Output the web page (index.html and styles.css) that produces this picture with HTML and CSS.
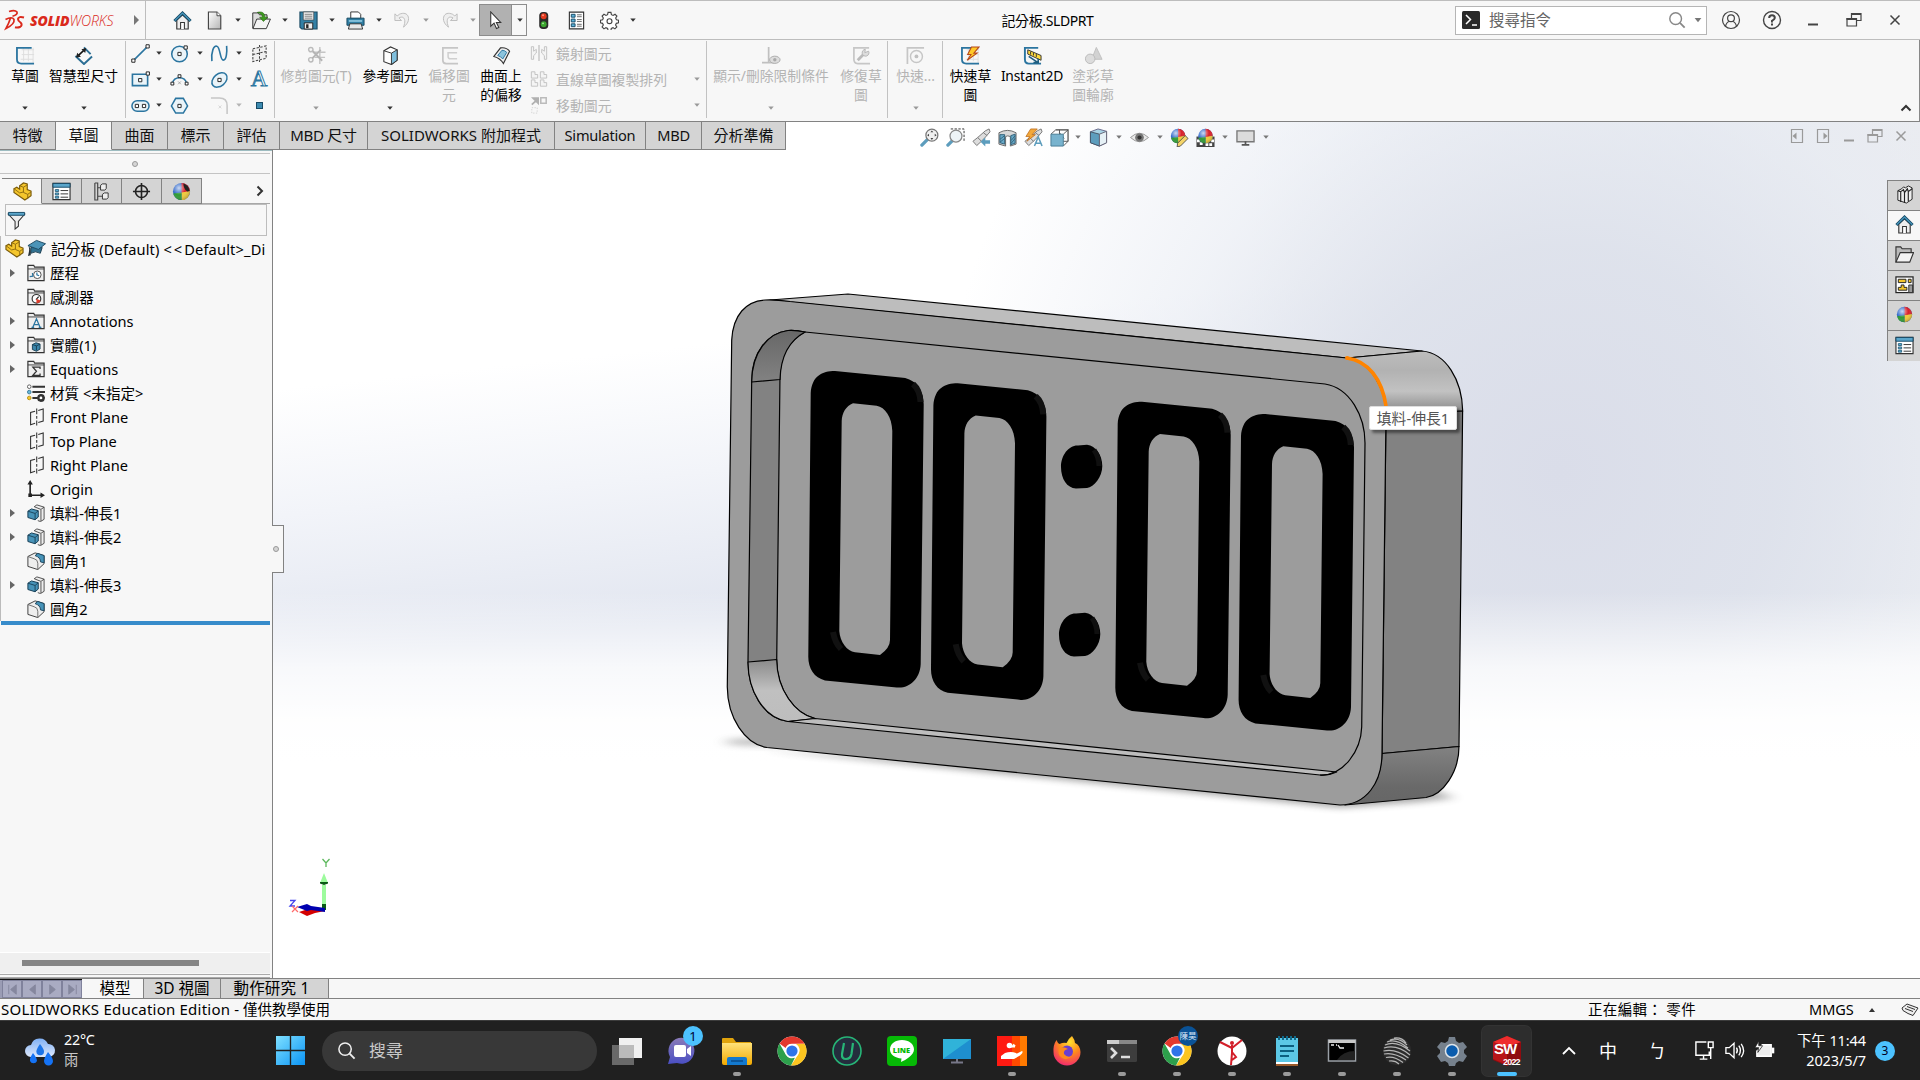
FILE: index.html
```html
<!DOCTYPE html>
<html lang="zh-Hant">
<head>
<meta charset="utf-8">
<title>記分板.SLDPRT</title>
<link rel="stylesheet" href="styles.css">
</head>
<body>
<svg class="defs" width="0" height="0">
<defs>
<linearGradient id="gBlue" x1="0" y1="0" x2="1" y2="1"><stop offset="0" stop-color="#8cc4dd"/><stop offset="1" stop-color="#2f7ea3"/></linearGradient>
<linearGradient id="gGrey" x1="0" y1="0" x2="1" y2="1"><stop offset="0" stop-color="#fff"/><stop offset="1" stop-color="#b5b5b5"/></linearGradient>
<linearGradient id="gYel" x1="0" y1="0" x2="0" y2="1"><stop offset="0" stop-color="#ffe27a"/><stop offset="1" stop-color="#f2a900"/></linearGradient>
<linearGradient id="gWin" x1="0" y1="0" x2="1" y2="1"><stop offset="0" stop-color="#7fe0ff"/><stop offset="1" stop-color="#0a94f5"/></linearGradient>
<radialGradient id="gFox" cx=".6" cy=".2" r=".9"><stop offset="0" stop-color="#ffe22e"/><stop offset=".45" stop-color="#ff8a1c"/><stop offset="1" stop-color="#f0197d"/></radialGradient>
<linearGradient id="gCloud" x1="0" y1="0" x2="0" y2="1"><stop offset="0" stop-color="#7fb0f5"/><stop offset="1" stop-color="#dfe9fb"/></linearGradient>
<linearGradient id="gChat" x1="0" y1="0" x2="0" y2="1"><stop offset="0" stop-color="#8a7bb8"/><stop offset="1" stop-color="#4a4fc4"/></linearGradient>
<radialGradient id="gShine" cx=".35" cy=".3" r=".8"><stop offset="0" stop-color="#fff" stop-opacity=".75"/><stop offset=".5" stop-color="#fff" stop-opacity="0"/><stop offset="1" stop-color="#000" stop-opacity=".3"/></radialGradient>
<linearGradient id="gTL" x1="0" y1="0" x2="0" y2="1"><stop offset="0" stop-color="#676767"/><stop offset="1" stop-color="#828282"/></linearGradient>
<linearGradient id="gBL" x1="0" y1="0" x2="0" y2="1"><stop offset="0" stop-color="#8a8a8a"/><stop offset=".5" stop-color="#c0c0c0"/><stop offset="1" stop-color="#bdbdbd"/></linearGradient>
<linearGradient id="gTR" x1="0" y1="0" x2="0" y2="1"><stop offset="0" stop-color="#bdbdbd"/><stop offset=".3" stop-color="#b2b2b2"/><stop offset=".62" stop-color="#c2c2c2"/><stop offset="1" stop-color="#7e7e7e"/></linearGradient>
<linearGradient id="gBR" x1="0" y1="0" x2="0" y2="1"><stop offset="0" stop-color="#828282"/><stop offset=".7" stop-color="#696969"/><stop offset="1" stop-color="#666"/></linearGradient>
<filter id="soft" x="-30%" y="-200%" width="160%" height="500%"><feGaussianBlur stdDeviation="7 3"/></filter>

<symbol id="house" viewBox="0 0 20 20"><path d="M4 9.5V19h12V9.5L10 4z" fill="#eee" stroke="#333" stroke-width="1.2"/><path d="M8 19v-7h4v7" fill="#fff" stroke="#333" stroke-width="1.1"/><path d="M1.5 10.5 10 2.2l8.5 8.3" fill="none" stroke="#174a66" stroke-width="3.2"/><path d="M1.8 10.2 10 2.2l8.2 8" fill="none" stroke="#4b9cc2" stroke-width="1.2"/></symbol>
<symbol id="doc" viewBox="0 0 20 20"><path d="M3.6 1h9l4 4v14h-13z" fill="url(#gGrey)" stroke="#444" stroke-width="1.2"/><path d="M12.6 1v4h4" fill="#fff" stroke="#444"/></symbol>
<symbol id="open" viewBox="0 0 20 20"><path d="M.8 2h6l1 2h8v4L13 18H.8z" fill="#ddd" stroke="#333"/><path d="M5 8.5h14.4L15 18.6H1z" fill="#f4f4f4" stroke="#333"/><path d="M5.5 1.5c5-1.5 8 .5 8 5h3.2L12 11 8 6.500h3C11 4 9 2.500 5.500 1.500z" fill="#3c9a1e" stroke="#245f10" stroke-width=".6"/></symbol>
<symbol id="save" viewBox="0 0 20 20"><path d="M1 1h18v18H3l-2-2z" fill="#3380a5" stroke="#1c4a63" stroke-width="1.2"/><path d="M4.500 1h11v8.500h-11z" fill="#eee" stroke="#444" stroke-width=".7"/><path d="M6 3.500h8M6 5.500h8M6 7.500h8" stroke="#666" stroke-width=".8"/><path d="M5.500 12.500h9V19h-9z" fill="#eee" stroke="#222"/><path d="M7.500 14h2.500v4H7.500z" fill="#222"/></symbol>
<symbol id="print" viewBox="0 0 20 20"><path d="M5 8V1h8l2.500 2.500V8z" fill="#fff" stroke="#333"/><path d="M1 7.500h18V15H1z" fill="#2f7ea3" stroke="#184a62"/><path d="M3 10.500h14" stroke="#a8dcf0" stroke-width="1.400"/><path d="M4 13.500h12l1.500 5.500h-15z" fill="#e8e8e8" stroke="#333"/></symbol>
<symbol id="undo" viewBox="0 0 20 20"><path d="M2 3v7h7L6.300 7.300C11 4.500 14.500 8.500 11 17c8.500-6 6-15.500-1-14.500-2.500.3-4.300 1.200-5.500 2.800z" fill="#efefef" stroke="#bdbdbd"/></symbol>
<symbol id="cursor" viewBox="0 0 20 20"><path d="M5 1v15l3.500-3.200L11 18.500l2.500-1.200-2.600-5.300H15.500z" fill="#fff" stroke="#333" stroke-width="1.100"/></symbol>
<symbol id="traffic" viewBox="0 0 20 20"><rect x="5.500" y="1" width="9.500" height="18" rx="4" fill="#2a2a2a"/><circle cx="10.200" cy="5.500" r="3.100" fill="#e23a1e"/><circle cx="10.200" cy="14" r="3.100" fill="#3aa52e"/><circle cx="9.500" cy="4.500" r="1" fill="#ff9c86"/><circle cx="9.500" cy="13" r="1" fill="#a8e69c"/></symbol>
<symbol id="opts" viewBox="0 0 20 20"><path d="M2.500 1.200h15v17.600h-15z" fill="#fff" stroke="#333" stroke-width="1.200"/><path d="M4.500 3.500h4v3h-4zM4.500 8.500h4v3h-4zM4.500 13.500h4v3h-4z" fill="#5cb3d9" stroke="#174a66"/><path d="M10.500 4h5M10.500 6h5M10.500 9h5M10.500 11h5M10.500 14h5M10.500 16h5" stroke="#444" stroke-width=".8"/></symbol>
<symbol id="gear" viewBox="0 0 20 20"><path d="M8.500 1.500h3l.5 2.400 1.800.8 2-1.300 2 2-1.300 2 .8 1.800 2.200.5v2.800l-2.300.5-.8 1.700 1.300 2.100-2 2-2-1.300-1.800.8-.4 2.200h-3l-.5-2.200-1.800-.8-2 1.300-2-2 1.300-2-.8-1.800-2.200-.5V9.700l2.300-.5.700-1.800-1.300-2 2-2 2.100 1.300 1.700-.8z" fill="#fff" stroke="#444" stroke-width="1.200"/><circle cx="10" cy="10.700" r="2.600" fill="#fff" stroke="#444" stroke-width="1.200"/></symbol>
<symbol id="dn" viewBox="0 0 8 8"><path d="M1.300 2.400h5.400L4 5.800z" fill="currentColor"/></symbol>

<symbol id="sketch" viewBox="0 0 20 20"><path d="M6 4h13M6 9h13M5 14h13M8 2v14M13 2v14M18 2v16" stroke="#ddd"/><path d="M16.500 2H1v12q0 4.500 4.500 4.500H19" fill="none" stroke="#2b75a0" stroke-width="1.900"/></symbol>
<symbol id="dim" viewBox="0 0 20 20"><path d="M10.500 1.500l7 7M1.500 10.500 10.500 19l8.500-8" fill="none" stroke="#2b6e94" stroke-width="2"/><path d="M3 11.500 12 3" stroke="#111" stroke-width="1.600"/><path d="m2.300 12.200 1-5 4 4zM12.800 2.300l-1 5-4-4z" fill="#222"/></symbol>
<symbol id="line" viewBox="0 0 20 20"><path d="M3 17 17 3" stroke="#2b75a0" stroke-width="1.600"/><path d="M.8 15.800h3.400v3.400H.8zM15.800.8h3.400v3.400h-3.400z" fill="#fff" stroke="#222"/></symbol>
<symbol id="circ" viewBox="0 0 20 20"><circle cx="10" cy="10.500" r="8.200" fill="#eaf4f9" stroke="#2b75a0" stroke-width="1.600"/><path d="M8.300 8.800h3.400v3.400H8.300zM14.800 2h3.400v3.400h-3.400z" fill="#fff" stroke="#222"/></symbol>
<symbol id="spline" viewBox="0 0 20 20"><path d="M2 18C1 8 4 1 7.500 2.500S10.500 17 14 17 18 8 17.500 2" fill="none" stroke="#2b75a0" stroke-width="1.700"/></symbol>
<symbol id="plane" viewBox="0 0 20 20"><path d="M3 5 17 2v13L3 18.500zM10 1v18M3 11l14-3" fill="#f0f0f0" stroke="#444" stroke-width="1.100" stroke-dasharray="2.500 1.500"/></symbol>
<symbol id="rect" viewBox="0 0 20 20"><path d="M1.500 4.500h16v12h-16z" fill="#eaf4f9" stroke="#2b75a0" stroke-width="1.700"/><path d="M8 9h3.400v3.400H8zM16 2h3.400v3.400H16z" fill="#fff" stroke="#222"/></symbol>
<symbol id="arc" viewBox="0 0 20 20"><path d="M2.500 14a7.700 7.700 0 0 1 15 0" fill="none" stroke="#2b75a0" stroke-width="1.600"/><path d="M1 12.800h3v3H1zM16 12.800h3v3h-3zM8.500 5h3v3h-3z" fill="#fff" stroke="#222"/><path d="m8.500 12 3 3m0-3-3 3" stroke="#999" stroke-width=".8"/></symbol>
<symbol id="ell" viewBox="0 0 20 20"><ellipse cx="10" cy="10.500" rx="9" ry="6.300" transform="rotate(-40 10 10.500)" fill="#eaf4f9" stroke="#2b75a0" stroke-width="1.600"/><path d="M8.300 8.800h3.400v3.400H8.300z" fill="#fff" stroke="#222"/></symbol>
<symbol id="slot" viewBox="0 0 20 20"><rect x="1" y="5" width="18" height="11" rx="5.500" fill="#eaf4f9" stroke="#2b75a0" stroke-width="1.600"/><path d="M4.500 8.800h3.400v3.400H4.500zM12 8.800h3.400v3.400H12z" fill="#fff" stroke="#222"/></symbol>
<symbol id="hex" viewBox="0 0 20 20"><path d="M6 2.500h8l4.500 8L14 18H6l-4.500-7.500z" fill="#eaf4f9" stroke="#2b75a0" stroke-width="1.600"/><path d="M8.300 8.800h3.400v3.400H8.300z" fill="#fff" stroke="#222"/></symbol>
<symbol id="fillet" viewBox="0 0 20 20"><path d="M1 2h9q8 0 8 8v9" fill="none" stroke="#c6c6c6" stroke-width="1.600"/><path d="m9 10 3 3m0-3-3 3" stroke="#d5d5d5"/></symbol>
<symbol id="trim" viewBox="0 0 20 20"><path d="M13.500 1v18M7 6.500h12.500M8 12h11" stroke="#c4c4c4" stroke-width="1.500"/><circle cx="4" cy="3.800" r="2.300" fill="none" stroke="#bbb" stroke-width="1.500"/><circle cx="4" cy="14.500" r="2.300" fill="none" stroke="#bbb" stroke-width="1.500"/><path d="m6 5.500 10 10M5.500 13l9-9" stroke="#b5b5b5" stroke-width="2"/></symbol>
<symbol id="cube" viewBox="0 0 20 20"><path d="m3 5 7-4 7 3v11l-6 4.500-8-3z" fill="#fff" stroke="#333" stroke-width="1.100"/><path d="m11 7.500 6-3.500v11l-6 4.500z" fill="#7fbfdd" stroke="#333"/><path d="m3 5 8 2.500" stroke="#333"/></symbol>
<symbol id="offs" viewBox="0 0 20 20"><path d="M19 2H3v13q0 3.500 3.500 3.500H19" fill="none" stroke="#c6c6c6" stroke-width="1.800"/><path d="M18 7H8.500v4q0 2.500 2.500 2.500h7" fill="none" stroke="#cfcfcf" stroke-width="1.600"/></symbol>
<symbol id="surf" viewBox="0 0 20 20"><path d="M2 11 9 2q6-1 9.500 3.500L12 18.500Q9 13 2 11z" fill="#eee" stroke="#333" stroke-width="1.200"/><path d="m6 10 4.500-5.500q3 0 5 2.200l-4.200 7Q9.500 11 6 10z" fill="#8cc4dd" stroke="#2b75a0"/></symbol>
<symbol id="mirror" viewBox="0 0 20 20"><path d="M10 1v18" stroke="#bbb" stroke-width="1.300"/><path d="M1.500 3v14h2.500v-4l3-3V6L4 8V3zM18.500 3v14H16v-4l-3-3V6l3 2V3z" fill="#f4f4f4" stroke="#c0c0c0"/></symbol>
<symbol id="patt" viewBox="0 0 20 20"><g fill="#f4f4f4" stroke="#c0c0c0"><path id="pc" d="M1.500 2h4v3h3v4h-7z"/><use href="#pc" x="10"/><use href="#pc" y="9"/><use href="#pc" x="10" y="9"/></g></symbol>
<symbol id="move" viewBox="0 0 20 20"><path d="M2 9.500 8 4M3.500 2.500H9V8z" fill="#b0b0b0" stroke="#b0b0b0" stroke-width="2"/><path d="M12 2h6v6h-6z" fill="none" stroke="#bbb" stroke-width="1.700"/><path d="M2 13h6v6H2z" fill="none" stroke="#d0d0d0" stroke-dasharray="1.500 1.500"/></symbol>
<symbol id="rel" viewBox="0 0 20 20"><path d="M7 1v16.500M0 17.500h13" stroke="#c0c0c0" stroke-width="1.800"/><ellipse cx="13.500" cy="14.500" rx="5.500" ry="3.800" fill="#ddd" stroke="#aaa"/><circle cx="13.500" cy="14.500" r="1.800" fill="#aaa"/></symbol>
<symbol id="repair" viewBox="0 0 20 20"><path d="M18 2H2v12q0 4.500 4 4.500h13" fill="none" stroke="#c6c6c6" stroke-width="1.800"/><path d="m6 15 7-7" stroke="#bbb" stroke-width="3"/><path d="M17.500 5.500A3.600 3.600 0 1 1 14 3.500L13.500 7z" fill="#ddd" stroke="#b5b5b5"/></symbol>
<symbol id="snap" viewBox="0 0 20 20"><path d="M1.500 19V2H19" fill="none" stroke="#c6c6c6" stroke-width="1.800"/><circle cx="11" cy="11" r="6.300" fill="none" stroke="#c6c6c6" stroke-width="1.500"/><circle cx="11" cy="11" r="2" fill="#c0c0c0"/></symbol>
<symbol id="rapid" viewBox="0 0 20 20"><use href="#sketch" width="20" height="20"/><path d="m11 1-4 8h3.500L6.500 15 17 7.500h-3.500L19 1z" fill="#ffc928" stroke="#b5471b" stroke-width="1.100"/></symbol>
<symbol id="i2d" viewBox="0 0 20 20"><path d="M16 2H2v12q0 4.500 4 4.500h13" fill="none" stroke="#2b75a0" stroke-width="2"/><path d="m5 4 14 6v5L5 8.500z" fill="#ffdb3d" stroke="#333"/><path d="M8 6v3M11 7v3M14 8.500v3" stroke="#333"/><path d="m6 11 9 6m1-3.500v4h-5" stroke="#1f5e80" stroke-width="1.700" fill="none"/></symbol>
<symbol id="shade" viewBox="0 0 20 20"><path d="m13 1.500 6 12.500H8z" fill="#d2d2d2" stroke="#c0c0c0"/><circle cx="6.500" cy="13.500" r="5" fill="#dcdcdc" stroke="#bbb"/></symbol>

<symbol id="zfit" viewBox="0 0 20 20"><path d="m2 18 6.500-6.500" stroke="#5d9dbd" stroke-width="3.500" stroke-linecap="round"/><circle cx="12.500" cy="7.500" r="6.300" fill="#f0f0f0" stroke="#777" stroke-width="1.300"/><path d="m12.500 2.500 1.500 2h-3zM12.500 12.500l1.500-2h-3zM7.500 7.500l2-1.500v3zM17.500 7.500l-2-1.500v3z" fill="#444"/></symbol>
<symbol id="zarea" viewBox="0 0 20 20"><path d="M5 1h14v13" fill="none" stroke="#333" stroke-dasharray="2.500 1.500"/><path d="m2 18 5-5" stroke="#5d9dbd" stroke-width="3.500" stroke-linecap="round"/><circle cx="10.500" cy="8.500" r="6.300" fill="#eef4f7" stroke="#888" stroke-width="1.300"/></symbol>
<symbol id="scope" viewBox="0 0 20 20"><path d="m1 14 5-4L14 3l4-2 1 3-7 8-7 6.500z" fill="#ddd" stroke="#777"/><path d="m6 10 4 4M12 5l4 3" stroke="#777"/></symbol>
<symbol id="prev" viewBox="0 0 20 20"><use href="#scope" width="20" height="20"/><path d="M9 14.500 14 10v3h5v3.500h-5v3z" fill="#5d9dbd"/></symbol>
<symbol id="sect" viewBox="0 0 20 20"><path d="M1 5q9-5 18 0v12l-6 2V9q-3-1.500-5 0v10l-7-2z" fill="#d8d8d8" stroke="#666"/><path d="M2 7h5v10l-5-1.500zM13.500 8 18 6.500v9.500l-4.500 1.500z" fill="#69a9c7" stroke="#31617a"/><path d="m2 12 5-4M2 15l5-4M14 13l4-5M14 16l4-5" stroke="#26566e" stroke-width=".8"/></symbol>
<symbol id="dyn" viewBox="0 0 20 20"><use href="#scope" width="20" height="20"/><path d="M7 1 2 9h4l-3 5 9-7H8.500L14 1z" fill="#f3a83a" stroke="#b9681b" stroke-width=".8"/><path d="m11 19 4-9.500 4 9.500M12.500 16h5" fill="none" stroke="#5d9dbd" stroke-width="1.600"/></symbol>
<symbol id="orient" viewBox="0 0 20 20"><path d="M6 2h13v12" fill="none" stroke="#444" stroke-width="1.200"/><path d="M1 6.500 6 2M14 6.500 19 2M14 19l5-5M10 2v12h9M10 5l5 6" stroke="#555" fill="none"/><path d="M1 6.500h13V19H1z" fill="#78b3ce" stroke="#4a7d96"/></symbol>
<symbol id="disp" viewBox="0 0 20 20"><path d="m1.500 4 8-3 9 2.500v12L11 19l-9.500-3.500z" fill="#a8d3e5" stroke="#668"/><path d="M1.500 4 11 6.500V19l-9.500-3.500z" fill="#5d9dbd" stroke="#456"/><path d="m11 6.500 7.500-3v12L11 19z" fill="#e6f1f6" stroke="#667"/></symbol>
<symbol id="eye" viewBox="0 0 20 20"><path d="M.5 10Q10 1 19.500 10 10 19 .5 10z" fill="#e8e8e8" stroke="#999"/><circle cx="10" cy="10" r="4.600" fill="#777"/><circle cx="10" cy="10" r="2.200" fill="#333"/></symbol>
<symbol id="ball" viewBox="0 0 20 20"><circle cx="10" cy="10" r="9" fill="#2f67c9"/><path d="M10 1a9 9 0 0 1 9 8.500L10 12z" fill="#d8202a"/><path d="m10 11 9-1.500a9 9 0 0 1-9 9.500z" fill="#f0ca3a"/><path d="M1.300 12 10 11v8a9 9 0 0 1-8.700-7z" fill="#2f9a34"/><circle cx="10" cy="10" r="9" fill="url(#gShine)"/></symbol>
<symbol id="ballcut" viewBox="0 0 20 20"><use href="#ball" width="20" height="20"/><path d="M12 1.500q6 2 6.500 8l-2.500.5q-4-3-4-8.500z" fill="#222"/></symbol>
<symbol id="appear" viewBox="0 0 20 20"><use href="#ball" width="17" height="17"/><path d="m8 16 8-8 3 3-8 8-3.500 1z" fill="#f4d469" stroke="#444" stroke-width=".9"/></symbol>
<symbol id="scene" viewBox="0 0 20 20"><path d="M.5 9v11h19V9z" fill="#444"/><path d="M1 12h3v3H1zM4 15h3v3H4zM10 16h3v3h-3zM16 12h3v3h-3zM14 16h3v3h-3z" fill="#fff"/><use href="#ball" x="1.500" width="17" height="17"/></symbol>
<symbol id="mon" viewBox="0 0 20 20"><path d="M1 3h18v11.500H1z" fill="#dcdcdc" stroke="#777" stroke-width="1.400"/><path d="M10 14v3.500M6 17.800h8" stroke="#555" stroke-width="1.800"/></symbol>
<symbol id="restore" viewBox="0 0 16 16"><path d="M5.500 6V1.500h9.500v7h-5" fill="none" stroke="currentColor" stroke-width="1.200"/><path d="M5 2h10" stroke="currentColor" stroke-width="2"/><path d="M1 6.500h9.500v7.500H1z" fill="none" stroke="currentColor" stroke-width="1.200"/><path d="M.5 7h10.500" stroke="currentColor" stroke-width="2"/></symbol>
<symbol id="x" viewBox="0 0 16 16"><path d="m3.500 3.500 9 9m0-9-9 9" stroke="currentColor" stroke-width="1.500"/></symbol>
<symbol id="min" viewBox="0 0 16 16"><path d="M3 12.500h10" stroke="currentColor" stroke-width="2"/></symbol>
<symbol id="pl" viewBox="0 0 16 16"><path d="M2.500 1.500h11v13h-11z" fill="none" stroke="currentColor" stroke-width="1.200"/><path d="m3.500 8 4-3.500v7z" fill="currentColor"/></symbol>
<symbol id="mag" viewBox="0 0 20 20"><circle cx="8.500" cy="8.500" r="6.500" fill="none" stroke="currentColor" stroke-width="1.600"/><path d="m13.300 13.300 5.200 5.200" stroke="currentColor" stroke-width="2"/></symbol>

<symbol id="part" viewBox="0 0 20 20"><path d="m1 7 3-1.500 3 2V4l4-3 4 1v6l4 1.500v5L12.500 19 1 11z" fill="#f5c62c" stroke="#7a5b0a" stroke-width="1.200"/><path d="m7 4 4 1.500V11l4.500 2V18M11 5.500 15 3M15.500 13l3.500-2.500M1 7l6 4.500 4-1" fill="none" stroke="#8f6d10"/></symbol>
<symbol id="ptree" viewBox="0 0 20 20"><path d="M1 1.500h18v17H1z" fill="#fff" stroke="#333" stroke-width="1.200"/><path d="M1 1.500h18v4H1z" fill="#5aa6cb" stroke="#174a66"/><path d="M3.500 8h3.500v2H3.500zM3.500 11.500h3.500v2H3.500zM3.500 15h3.500v2H3.500z" fill="#5cb3d9" stroke="#174a66" stroke-width=".8"/><path d="M9 9h8M9 12.500h8M9 16h8" stroke="#333"/></symbol>
<symbol id="conf" viewBox="0 0 20 20"><path d="M3 1v18h3v-4M3 1h3v4M6 5v10M6 6h4M6 15h6" fill="none" stroke="#444" stroke-width="1.200"/><path d="m9 3.500 2-1.500h4v5l-1.500 1.500H9zM11 13l2-1.500h4v5L15.500 18H11z" fill="#eee" stroke="#333"/></symbol>
<symbol id="target" viewBox="0 0 20 20"><circle cx="10" cy="10" r="6.300" fill="none" stroke="#222" stroke-width="1.700"/><path d="M10 1v18M1 10h18" stroke="#222" stroke-width="1.700"/></symbol>
<symbol id="funnel" viewBox="0 0 20 20"><path d="M1.500 3.500h17L12 11v5l-3.500 3v-8z" fill="#eee" stroke="#333" stroke-width="1.100"/><path d="M1.500 1.500h17v3h-17z" fill="#5aa6cb" stroke="#174a66"/></symbol>
<symbol id="cap" viewBox="0 0 20 20"><path d="M4 9v6q5-3 10 0l2-6z" fill="#2f7090" stroke="#183c50"/><path d="m1 7 9-5.500L19.500 5 12 11z" fill="#4b94b8" stroke="#1d4a62"/><path d="M1.500 7.500C3 10 2 14 1 18l3-1q0-6-1-8z" fill="#26323a"/></symbol>
<symbol id="fold" viewBox="0 0 20 20"><path d="M1 18.500V1.500h6.500l1 2H19v15z" fill="#eee" stroke="#333" stroke-width="1.300"/><path d="M1 5.500h18" stroke="#333"/></symbol>
<symbol id="f-hist" viewBox="0 0 20 20"><use href="#fold" width="20" height="20"/><circle cx="11.500" cy="12" r="4.200" fill="#fff" stroke="#444"/><path d="M11 9.500V12l2.500 1M3 14l3.500-.5L6 10" fill="none" stroke="#2b75a0" stroke-width="1.300"/></symbol>
<symbol id="f-sens" viewBox="0 0 20 20"><use href="#fold" width="20" height="20"/><circle cx="10.500" cy="12" r="4.800" fill="#fff" stroke="#333" stroke-width="1.300"/><path d="m10 13 3-3.500" stroke="#222" stroke-width="1.300"/><path d="M10.500 12v5q4 0 4.500-3z" fill="#dd3b2a"/></symbol>
<symbol id="f-a" viewBox="0 0 20 20"><use href="#fold" width="20" height="20"/><path d="m6.500 17 4-9.500 4 9.500M8 14h5M5 17h3M13 17h3" fill="none" stroke="#2b75a0" stroke-width="1.400"/></symbol>
<symbol id="f-body" viewBox="0 0 20 20"><use href="#fold" width="20" height="20"/><path d="m6 9.500 4-2 4.500 1.500v5.500l-4 2.500L6 15z" fill="#3b86ab" stroke="#173c50"/><path d="m6 9.500 4.500 1.500 4-2M10.500 11v5" stroke="#173c50" fill="none"/></symbol>
<symbol id="f-eq" viewBox="0 0 20 20"><use href="#fold" width="20" height="20"/><path d="M14.500 10V8H6.500l4 4.500-4 4.500h8v-2" fill="none" stroke="#333" stroke-width="1.400"/></symbol>
<symbol id="mat" viewBox="0 0 20 20"><path d="M6 3h14M6 9h14M6 15.500h6" stroke="#333" stroke-width="2.200"/><circle cx="2.500" cy="3" r="2" fill="#fff" stroke="#555"/><circle cx="2.500" cy="9" r="2" fill="#6bb8da" stroke="#37799a"/><circle cx="2.500" cy="15.500" r="2" fill="#f5c62c" stroke="#b98e10"/><circle cx="15.500" cy="15.500" r="3" fill="none" stroke="#333" stroke-width="2.600"/><path d="M15.500 11v9M11 15.500h9M12.300 12.300l6.400 6.400m0-6.400-6.400 6.400" stroke="#333" stroke-width="1.300"/><circle cx="15.500" cy="15.500" r="1.500" fill="#fff"/></symbol>
<symbol id="refp" viewBox="0 0 20 20"><path d="M9 17 4 18.500V5l5-1.500M12.500 2.700 18 1v13.500l-5.500 1.500M10.800.5V7M10.800 9v3M10.800 14v5.500" fill="none" stroke="#333" stroke-width="1.200"/></symbol>
<symbol id="orig" viewBox="0 0 20 20"><path d="M3.500 4v13H17" fill="none" stroke="#222" stroke-width="1.800"/><path d="M3.500 0 6.500 5h-6zM20 17l-5-3v6zM1.500 15h4v4h-4z" fill="#222"/></symbol>
<symbol id="extr" viewBox="0 0 20 20"><path d="m8 3 3-2 8 2.500V17l-4 2.500-3-1" fill="#eee" stroke="#444"/><path d="M15.500 6.500V19M8 3l7.500 3 3.500-2.500" fill="none" stroke="#444"/><path d="m1 8 4-2.500 7.500 2v7L9 17.500l-8-2.500z" fill="#4793b8" stroke="#184057" stroke-width="1.100"/><path d="m1 8 8 2.500 3.500-3M9 10.500v7" fill="none" stroke="#184057"/></symbol>
<symbol id="fil" viewBox="0 0 20 20"><path d="m1 5 8-4 10 3v9l-7 6.500L1 16z" fill="#eee" stroke="#444" stroke-width="1.100"/><path d="m9 4 3-2.500L19 4v8l-4-1q0-5-6-7z" fill="#4793b8" stroke="#184057"/><path d="m1 5 7 2.500q4 1 4 5v7" fill="none" stroke="#666"/></symbol>
<symbol id="books" viewBox="0 0 20 20"><path d="m3 6 4-2 2-2 2 1 3-2 4 2v12l-6 4-9-3z" fill="#eee" stroke="#222"/><path d="m3 6 3 1v11M6 7l3-2 1 3v11M10 8l3-4 1 3v10M14 7l4-3" fill="none" stroke="#222" stroke-width="1.200"/></symbol>
<symbol id="folder" viewBox="0 0 20 20"><path d="M1 18V2h5l1.500 2H17v4" fill="#bbb" stroke="#333" stroke-width="1.200"/><path d="M5.500 8h14L15.500 18H1z" fill="#f3f3f3" stroke="#333" stroke-width="1.200"/></symbol>
<symbol id="palette" viewBox="0 0 20 20"><rect x="1" y="2" width="18" height="16.500" fill="#fff" stroke="#222" stroke-width="1.300"/><path d="M3.500 4.500h8V8h-8zM14 4.500h3V8h-3zM3.500 16v-3h3v-2.500h3V13h3v3z" fill="#f5c62c" stroke="#222"/><path d="M14.500 10.500h4v8h-4z" fill="#999" stroke="#333"/></symbol>

<symbol id="chrome" viewBox="0 0 30 30"><circle cx="15" cy="15" r="14.500" fill="#fff"/><path d="M15 .5A14.500 14.500 0 0 1 27.600 7.800H15A7.200 7.200 0 0 0 8.600 12L2.600 7.500A14.500 14.500 0 0 1 15 .5z" fill="#e5392e"/><path d="M27.600 7.800A14.500 14.500 0 0 1 14 29.500l7.200-11A7.200 7.200 0 0 0 19 8z" fill="#fcc520"/><path d="M2.500 7.600 8.700 18.500A7.200 7.200 0 0 0 18 21.600L14 29.500A14.500 14.500 0 0 1 2.500 7.600z" fill="#2da04c"/><circle cx="15" cy="15" r="7" fill="#fff"/><circle cx="15" cy="15" r="5.600" fill="#2f74e8"/></symbol>
</defs>
</svg>

<div class="app">
<header class="titlebar">
  <div class="brand">
    <svg class="ds" viewBox="0 0 22 22"><path d="M5 2.500Q11 .5 13 3q1 2.500-4.500 4.200M1.500 10.500Q8 7 10 10.500 11 15 2 19.500 5 14 6.500 9" fill="none" stroke="#da291c" stroke-width="1.700"/><path d="M20 8.500Q14.500 7 14 10q0 2 2.500 3.500Q19 16 16 18q-2.500 1-5 .2" fill="none" stroke="#da291c" stroke-width="2"/></svg>
    <span class="brand-name"><b>SOLID</b>WORKS</span>
    <i class="tri-right"></i>
  </div>
  <div class="quick">
    <svg class="ic home"><use href="#house"/></svg>
    <span class="qa"><svg class="ic"><use href="#doc"/></svg><svg class="dn"><use href="#dn"/></svg></span>
    <span class="qa"><svg class="ic"><use href="#open"/></svg><svg class="dn"><use href="#dn"/></svg></span>
    <span class="qa"><svg class="ic"><use href="#save"/></svg><svg class="dn"><use href="#dn"/></svg></span>
    <span class="qa"><svg class="ic"><use href="#print"/></svg><svg class="dn"><use href="#dn"/></svg></span>
    <span class="qa off"><svg class="ic"><use href="#undo"/></svg><svg class="dn"><use href="#dn"/></svg></span>
    <span class="qa off last"><svg class="ic flip"><use href="#undo"/></svg><svg class="dn"><use href="#dn"/></svg></span>
    <span class="picker"><b><svg class="ic"><use href="#cursor"/></svg></b><svg class="dn"><use href="#dn"/></svg></span>
    <svg class="ic q3"><use href="#traffic"/></svg>
    <svg class="ic q3"><use href="#opts"/></svg>
    <svg class="ic q3"><use href="#gear"/></svg>
    <svg class="dn"><use href="#dn"/></svg>
  </div>
  <div class="doc-title">記分板.SLDPRT</div>
  <div class="cmd-search">
    <svg class="cmd" viewBox="0 0 18 18"><rect width="18" height="18" rx="1.500" fill="#2a2a2a"/><path d="m4 4 4.500 4.500L4 13M10 14h5" fill="none" stroke="#fff" stroke-width="1.500"/></svg>
    <span>搜尋指令</span>
    <svg class="ic18"><use href="#mag"/></svg><svg class="dn"><use href="#dn"/></svg>
  </div>
  <div class="win-btns">
    <svg viewBox="0 0 20 20"><circle cx="10" cy="10" r="8.500" fill="none" stroke="#444" stroke-width="1.200"/><circle cx="10" cy="8.300" r="3.400" fill="none" stroke="#444" stroke-width="1.200"/><path d="M4.500 16Q6 11.500 8.500 11.500M15.500 16Q14 11.500 11.500 11.500" fill="none" stroke="#444" stroke-width="1.200"/></svg>
    <svg viewBox="0 0 20 20"><circle cx="10" cy="10" r="8.500" fill="none" stroke="#444" stroke-width="1.400"/><path d="M7.200 8Q7.200 5.300 10 5.300T12.800 8Q12.800 9.300 10 10.800V12.500M10 13.600v2" fill="none" stroke="#444" stroke-width="2"/></svg>
    <svg class="w16"><use href="#min"/></svg>
    <svg class="w16"><use href="#restore"/></svg>
    <svg class="w16"><use href="#x"/></svg>
  </div>
</header>

<section class="ribbon">
  <div class="rb w49"><svg class="ic"><use href="#sketch"/></svg><span>草圖</span><svg class="dn"><use href="#dn"/></svg></div>
  <div class="rb w71"><svg class="ic"><use href="#dim"/></svg><span>智慧型尺寸</span><svg class="dn"><use href="#dn"/></svg></div>
  <i class="sep first"></i>
  <div class="tools">
    <svg class="ic"><use href="#line"/></svg><svg class="dn"><use href="#dn"/></svg><svg class="ic"><use href="#circ"/></svg><svg class="dn"><use href="#dn"/></svg><svg class="ic"><use href="#spline"/></svg><svg class="dn"><use href="#dn"/></svg><svg class="ic"><use href="#plane"/></svg>
    <svg class="ic"><use href="#rect"/></svg><svg class="dn"><use href="#dn"/></svg><svg class="ic"><use href="#arc"/></svg><svg class="dn"><use href="#dn"/></svg><svg class="ic"><use href="#ell"/></svg><svg class="dn"><use href="#dn"/></svg><span class="glyph-a">A</span>
    <svg class="ic"><use href="#slot"/></svg><svg class="dn"><use href="#dn"/></svg><svg class="ic"><use href="#hex"/></svg><i></i><svg class="ic"><use href="#fillet"/></svg><svg class="dn off"><use href="#dn"/></svg><i class="point"></i>
  </div>
  <i class="sep"></i>
  <div class="rb w82 off"><svg class="ic"><use href="#trim"/></svg><span>修剪圖元(T)</span><svg class="dn"><use href="#dn"/></svg></div>
  <div class="rb w66"><svg class="ic"><use href="#cube"/></svg><span>參考圖元</span><svg class="dn"><use href="#dn"/></svg></div>
  <div class="rb w52 off"><svg class="ic"><use href="#offs"/></svg><span>偏移圖<br>元</span></div>
  <div class="rb w52"><svg class="ic"><use href="#surf"/></svg><span>曲面上<br>的偏移</span></div>
  <div class="rlist off">
    <p><svg class="ic"><use href="#mirror"/></svg>鏡射圖元</p>
    <p><svg class="ic"><use href="#patt"/></svg>直線草圖複製排列<svg class="dn"><use href="#dn"/></svg></p>
    <p><svg class="ic"><use href="#move"/></svg>移動圖元<svg class="dn"><use href="#dn"/></svg></p>
  </div>
  <i class="sep"></i>
  <div class="rb w128 off"><svg class="ic"><use href="#rel"/></svg><span>顯示/刪除限制條件</span><svg class="dn"><use href="#dn"/></svg></div>
  <div class="rb w52 off"><svg class="ic"><use href="#repair"/></svg><span>修復草<br>圖</span></div>
  <i class="sep"></i>
  <div class="rb w54 off"><svg class="ic"><use href="#snap"/></svg><span>快速...</span><svg class="dn"><use href="#dn"/></svg></div>
  <i class="sep"></i>
  <div class="rb w54"><svg class="ic"><use href="#rapid"/></svg><span>快速草<br>圖</span></div>
  <div class="rb w68"><svg class="ic"><use href="#i2d"/></svg><span>Instant2D</span></div>
  <div class="rb w56 off"><svg class="ic"><use href="#shade"/></svg><span>塗彩草<br>圖輪廓</span></div>
  <svg class="collapse" viewBox="0 0 12 8"><path d="m1.500 6.500 4.500-4.500 4.500 4.500" fill="none" stroke="#333" stroke-width="2"/></svg>
</section>

<main class="work">
  <svg class="scene" viewBox="0 122 1920 856">
    <ellipse cx="760" cy="742" rx="36" ry="3.500" fill="#555" opacity=".4" filter="url(#soft)"/>
    <path d="M765 750 1340 808l80-6 34-4-20-8z" fill="#444" opacity=".45" filter="url(#soft)"/>
    <g stroke="#000" stroke-width="1.200" stroke-linejoin="round">
      <path d="M770 300 848 294 1422 351 1347 358z" fill="#bdbdbd"/>
      <path d="M1347 358 1422 351C1446 353 1462 380 1462.700 411L1386 416Q1380 362 1347 358z" fill="url(#gTR)"/>
      <path d="M1386 415 1462.600 411 1459 746.500 1382 753.500z" fill="#828282"/>
      <path d="M1382 753.500 1459 746.500C1459 772 1443 795 1426 797.500L1345 805Q1380 796 1382 753.500z" fill="url(#gBR)"/>
      <path d="M765 300Q775 299.500 790 301.500L1347 358C1370 361 1386 388 1386 415L1382 753C1382 783 1366 805 1340 805L767 747.500C745 744 727.500 718 727.300 687L731.700 340C733 315 746 301 765 300z" fill="#9c9c9c"/>
      <path d="M805 332Q796 330 788 330.500C768 333 752 352 751.700 380L748 661C748 690 763 718 788 721.500L815 718.500C795 714 777 690 776.700 661L780 375Q781 345 805 332z" fill="#828282"/>
      <path d="M805 332Q796 330 788 330.500C768 333 752 352 751.700 382L780 379.500Q781 345 805 332z" fill="url(#gTL)"/>
      <path d="M748 662C748 690 763 718 788 721.500L815 718.500C795 714 777 690 776.700 659.500z" fill="url(#gBL)"/>
      <path d="M788 721.500 815 718.500 1336.700 772Q1328 776 1320 775z" fill="#bdbdbd"/>
      <path d="M805 332 1325 384C1350 388 1365 416 1365 443L1361.700 727C1361 750 1344 776 1320 775" fill="none"/>
    </g>
    <g id="digit" fill="none">
      <path fill-rule="evenodd" fill="#000" d="M835 371 903 377.700C915 379 924 390 923.700 405L920.700 664C920 680 908 689 896.700 687.400L825 680.400C814 678 808 668 808.300 656L810.700 393C812 376 822 371 835 371zM853 403.300C846 406 842 413 841.700 421L839.300 631C840 642 847 651 855 652.300L880 655Q890 648 890 640L892.300 431C892 417 885 407 876.700 405.700z"/>
      <path d="M913 384Q920 390 920.500 402M833 632Q835 643 841 649" stroke="#111" stroke-width="6"/>
    </g>
    <use href="#digit" x="122.700" y="12.300"/>
    <use href="#digit" x="307" y="30.700"/>
    <use href="#digit" x="430.300" y="43"/>
    <path id="dot" d="M1076 488.500C1067 488 1061 479 1061 467S1069 445 1078 445.500L1087 444.700C1096 446 1102.300 455 1102.300 466S1094 487 1087 488z"/>
    <use href="#dot" x="-2" y="168"/>
    <path d="M1094 450Q1099 457 1099 466M1092 618Q1097 625 1097 634" fill="none" stroke="#0f0f0f" stroke-width="5"/>
    <path d="M1347 358C1368 361 1382 379 1386 406" fill="none" stroke="#ff8400" stroke-width="3.600"/>
    <circle cx="1347" cy="358" r="2" fill="#ff8400"/>
    <path d="M324 909v-24" stroke="#9dfb9d" stroke-width="4"/><path d="m324 873 4 10h-8z" fill="#9dfb9d"/><path d="M320 882h8v1.500l-4 1.500-4-1.500zM322 904h4v6h-4z" fill="#0a5a14"/>
    <path d="m325 911-10 2-8 3-8-4 9-3z" fill="#d40000"/><path d="m325 908-14-2-4-2-10 3 10 4 4-1 14 2z" fill="#0000b0"/>
    <path d="m322.500 859 3.500 4 3.500-4M326 863v4" fill="none" stroke="#5cb85c" stroke-width="1.300"/>
    <path d="M290 900.500h5l-5 5.500h5" fill="none" stroke="#4545ee" stroke-width="1.300"/><path d="m292 906 6 6m0-6-6 6" stroke="#ff6a6a" stroke-width="1.200"/>
  </svg>
  <div class="tabrow">
    <nav class="tabs">
      <a class="t56">特徵</a><a class="t55 on">草圖</a><a class="t57">曲面</a><a class="t55">標示</a><a class="t57">評估</a><a class="t88">MBD 尺寸</a><a class="t187">SOLIDWORKS 附加程式</a><a class="t90">Simulation</a><a class="t56">MBD</a><a class="t84">分析準備</a>
    </nav>
    <div class="hud">
      <svg class="ic"><use href="#zfit"/></svg><svg class="ic"><use href="#zarea"/></svg><svg class="ic"><use href="#prev"/></svg><svg class="ic"><use href="#sect"/></svg><svg class="ic"><use href="#dyn"/></svg><svg class="ic"><use href="#orient"/></svg><svg class="dn"><use href="#dn"/></svg><svg class="ic"><use href="#disp"/></svg><svg class="dn"><use href="#dn"/></svg><svg class="ic"><use href="#eye"/></svg><svg class="dn"><use href="#dn"/></svg><svg class="ic"><use href="#appear"/></svg><svg class="ic"><use href="#scene"/></svg><svg class="dn"><use href="#dn"/></svg><svg class="ic"><use href="#mon"/></svg><svg class="dn"><use href="#dn"/></svg>
    </div>
    <div class="docbtns"><svg class="w16"><use href="#pl"/></svg><svg class="w16 flip"><use href="#pl"/></svg><svg class="w16"><use href="#min"/></svg><svg class="w16"><use href="#restore"/></svg><svg class="w16"><use href="#x"/></svg></div>
  </div>
  <div class="lower">
    <aside class="panel">
      <div class="grip"><i></i></div>
      <div class="ptabs">
        <b class="on"><svg class="ic"><use href="#part"/></svg></b><b><svg class="ic"><use href="#ptree"/></svg></b><b><svg class="ic"><use href="#conf"/></svg></b><b><svg class="ic"><use href="#target"/></svg></b><b><svg class="ic"><use href="#ballcut"/></svg></b>
        <svg class="more" viewBox="0 0 8 12"><path d="m1.500 1.500 4.500 4.500-4.500 4.500" fill="none" stroke="#333" stroke-width="2"/></svg>
      </div>
      <div class="filter"><svg class="ic"><use href="#funnel"/></svg></div>
      <ul class="tree">
        <li class="root"><svg class="ic"><use href="#part"/></svg><svg class="ic"><use href="#cap"/></svg><span>記分板 (Default) <span class="wide">&lt;&lt;</span>Default&gt;_Di</span></li>
        <li class="exp"><svg class="ic"><use href="#f-hist"/></svg>歷程</li>
        <li><svg class="ic"><use href="#f-sens"/></svg>感測器</li>
        <li class="exp"><svg class="ic"><use href="#f-a"/></svg>Annotations</li>
        <li class="exp"><svg class="ic"><use href="#f-body"/></svg>實體(1)</li>
        <li class="exp"><svg class="ic"><use href="#f-eq"/></svg>Equations</li>
        <li class="mat"><svg class="ic"><use href="#mat"/></svg>材質 &lt;未指定&gt;</li>
        <li><svg class="ic"><use href="#refp"/></svg>Front Plane</li>
        <li><svg class="ic"><use href="#refp"/></svg>Top Plane</li>
        <li><svg class="ic"><use href="#refp"/></svg>Right Plane</li>
        <li><svg class="ic"><use href="#orig"/></svg>Origin</li>
        <li class="exp"><svg class="ic"><use href="#extr"/></svg>填料-伸長1</li>
        <li class="exp"><svg class="ic"><use href="#extr"/></svg>填料-伸長2</li>
        <li><svg class="ic"><use href="#fil"/></svg>圓角1</li>
        <li class="exp"><svg class="ic"><use href="#extr"/></svg>填料-伸長3</li>
        <li><svg class="ic"><use href="#fil"/></svg>圓角2</li>
      </ul>
      <div class="rollback"></div>
      <div class="hscroll"><i></i></div>
      <div class="pfoot"></div>
    </aside>
    <div class="splitter"><i></i></div>
    <nav class="taskpane">
      <b><svg class="ic"><use href="#books"/></svg></b><b class="on"><svg class="ic"><use href="#house"/></svg></b><b><svg class="ic"><use href="#folder"/></svg></b><b><svg class="ic"><use href="#palette"/></svg></b><b><svg class="ic ball"><use href="#ball"/></svg></b><b><svg class="ic"><use href="#ptree"/></svg></b>
    </nav>
  </div>
  <div class="tip">填料-伸長1</div>
</main>

<footer class="doctabs">
  <div class="navs">
    <b><svg viewBox="0 0 16 16"><path d="M4 3v10M12 3 6 8l6 5z"/></svg></b><b><svg viewBox="0 0 16 16"><path d="M11 3 5 8l6 5z"/></svg></b><b><svg viewBox="0 0 16 16"><path d="m5 3 6 5-6 5z"/></svg></b><b><svg viewBox="0 0 16 16"><path d="M12 3v10M4 3l6 5-6 5z"/></svg></b>
  </div>
  <a class="b61 on">模型</a><a class="b77">3D 視圖</a><a class="b108">動作研究 1</a>
</footer>
<div class="status">
  <span class="edition"><span class="latin">SOLIDWORKS Education Edition -</span> 僅供教學使用</span>
  <span class="editing">正在編輯： 零件</span>
  <span class="units">MMGS</span>
  <i class="up"></i>
  <svg class="tag" viewBox="0 0 18 14"><path d="m1 5 5-4 11 4-5 7.500-5-2-5-3z" fill="#eee" stroke="#333"/><path d="m4 5.500 8 3M6 3.500l8 3" stroke="#333"/></svg>
</div>

<div class="taskbar">
  <svg class="wicon" viewBox="0 0 32 30"><path d="M7 21a6 6 0 0 1 0-12 9 9 0 0 1 17-1 6.500 6.500 0 0 1 1 13z" fill="url(#gCloud)"/><path d="M16 8q4 5 4 7.500a3.800 3.800 0 0 1-7.600 0Q12.400 13 16 8z" fill="#1b74e8"/><path d="M9 17q4 5 4 8a3.800 3.800 0 0 1-7 0q-.5-3 3-8zM24 16q5 6 5 9a4.500 4.500 0 0 1-9 0q0-3 4-9z" fill="#1573f5"/></svg>
  <div class="weather"><span>22°C</span><span class="dim">雨</span></div>
  <svg class="start" viewBox="0 0 30 30"><path d="M0 0h14.300v14.300H0zM15.700 0H30v14.300H15.700zM0 15.700h14.300V30H0zM15.700 15.700H30V30H15.700z" fill="url(#gWin)"/></svg>
  <div class="search"><svg class="ic18"><use href="#mag"/></svg>搜尋</div>
  <div class="apps">
    <b><svg viewBox="0 0 30 30"><path d="M7 2h23v20H7z" fill="#f0f0f0"/><path d="M0 9h22v20H0z" fill="#777" opacity=".85"/><path d="M7 9h15v13H7z" fill="#bbb"/></svg></b>
    <b><svg viewBox="0 0 30 30"><path d="M1 28 3 21a13 13 0 1 1 7 6z" fill="url(#gChat)"/><rect x="7" y="9" width="12" height="12" rx="2" fill="#fff"/><path d="m20 13 4-3v10l-4-3z" fill="#fff"/></svg><em class="badge">1</em></b>
    <b class="run"><svg viewBox="0 0 30 30"><path d="M0 3q0-1 1-1h10l3 4h15v8H0z" fill="#e0a30c"/><path d="M0 7h30v20q0 2-2 2H2q-2 0-2-2z" fill="url(#gYel)"/><path d="M5 29v-6q0-2 2-2h16q2 0 2 2v6z" fill="#1379cf"/><path d="M9 25h12" stroke="#0a4b8a" stroke-width="1.500"/></svg></b>
    <b><svg viewBox="0 0 30 30"><use href="#chrome"/></svg></b>
    <b><svg viewBox="0 0 30 30"><circle cx="15" cy="15" r="14" fill="#242d3d" stroke="#27b577" stroke-width="1.600"/><path d="M12 7 10 18q-.5 5 4 5t5.500-5L21 7" fill="none" stroke="#27b577" stroke-width="2.200"/></svg></b>
    <b><svg viewBox="0 0 30 30"><rect width="30" height="30" rx="4" fill="#06b906"/><path d="M15 4c7 0 12 4 12 9.500C27 19 19 24 14 26l.5-3.500C8 22 3 18.500 3 13.500 3 8 8 4 15 4z" fill="#fff"/></svg><span class="line">LINE</span></b>
    <b><svg viewBox="0 0 30 30"><path d="M1 3h28v20H1z" fill="#1e8fcf"/><path d="M1 3h28L1 23z" fill="#3ccbe0" opacity=".6"/><path d="M15 23v3M9 26.500h12" stroke="#778" stroke-width="2"/></svg></b>
    <b class="run"><svg viewBox="0 0 30 30"><path d="M0 0h30v30H0z" fill="#ff1a12"/><path d="M15 0h15v30H15z" fill="#ff4a00"/><path d="M23 0h7v30h-7z" fill="#ff7a00"/><path d="m4 20 4-3q6-2 11 0 2 2-3 2.500L25 15q2 1-2 4.500L17 23H4z" fill="#fff"/><path d="M18 10.500h-7M18 10.500l-2-2" stroke="#fff" stroke-width="2"/><circle cx="12.500" cy="9.500" r="2.800" fill="#fff"/></svg></b>
    <b><svg viewBox="0 0 30 30"><path d="M20 0q3 4 3 7 5 2 5.500 9A13.500 13.500 0 0 1 1.500 16Q1 9 4.500 4q1 3 3 4 4-2 7-1Q16 3 20 0z" fill="url(#gFox)"/><circle cx="15" cy="15.500" r="6" fill="#6b3fd0"/><path d="M7 12q5-2 9 1-5 1-4 5 3 4 8 2-5 5-10 2t-3-10z" fill="#ff8a1c"/></svg></b>
    <b class="run"><svg viewBox="0 0 30 30"><rect y="4" width="30" height="22" rx="1.500" fill="#3d3d3d"/><path d="M0 4h12v4H0z" fill="#ccc"/><path d="M12 4h18v4H12z" fill="#888"/><path d="m4 12 5 5-5 5M14 21h9" fill="none" stroke="#ddd" stroke-width="2.600"/></svg></b>
    <b class="run"><svg viewBox="0 0 30 30"><use href="#chrome"/></svg><em class="badge who">陳昊</em></b>
    <b class="run"><svg viewBox="0 0 30 30"><circle cx="15" cy="15" r="14.500" fill="#fff"/><path d="M15 9v8l-1 12M15 12 3 6M15 12 25 4M15 16l4 5-4 3" fill="none" stroke="#d31f2a" stroke-width="2"/><circle cx="15" cy="7" r="2" fill="#d31f2a"/></svg></b>
    <b class="run"><svg viewBox="0 0 30 30"><path d="M4 2h22v26H4z" fill="#5cc8e6"/><path d="M4 27h22v3H4z" fill="#9a5a2a"/><path d="M4 26h22v2H4z" fill="#fff"/><path d="M7 0v4M11 0v4M15 0v4M19 0v4M23 0v4" stroke="#0f6a8c" stroke-width="2"/><path d="M8 10h14M8 15h14M8 20h9" stroke="#0c5f80" stroke-width="2"/></svg></b>
    <b class="run"><svg viewBox="0 0 30 30"><path d="M1.500 4h27v21h-27z" fill="#000" stroke="#9aa0a6" stroke-width="1.500"/><path d="M1.500 4h27v3h-27z" fill="#c8c8c8"/><path d="M4 9h3M9 9h1M11 9l2 3h4" stroke="#eee" stroke-width="1.300" fill="none"/><path d="M10 24q6-9 18-9v9z" fill="#222"/></svg></b>
    <b class="run"><svg viewBox="0 0 30 30"><circle cx="15" cy="15" r="14" fill="#2c2c2c"/><path d="M5 6q9-4 21 6M3 9q11-5 25 6M2 12q13-4 26 7M1.500 15q12-3 25 7M2 18q10-2 22 6M4 21.500q8-2 17 5M7 25q6-1 10 3M8 4q9-3 17 5M12 2q8-1 12 5" fill="none" stroke="#b5b5b5" stroke-width="1.200"/></svg></b>
    <b class="run"><svg viewBox="0 0 30 30"><path d="M12 1h6l1 4 3 2 4-1 4 5-3 3v3l3 3-4 6-4-1-3 2-1 3h-6l-1-3-3-2-4 1-4-6 3-3v-3l-3-3 4-5 4 1 3-2z" fill="#76818d"/><circle cx="15" cy="15" r="6.500" fill="#0b5cad" stroke="#dfe5ea" stroke-width="1.500"/></svg></b>
    <b class="run act"><svg viewBox="0 0 30 30"><path d="m1 6 14-6 14 6v18L15 30 1 24z" fill="#8f0c10"/><path d="m1 6 14-6 14 6-14 5z" fill="#ef2d2d"/><path d="M15 11v18L1 23V6z" fill="#b81518"/></svg><span class="sw">SW</span><span class="yr">2022</span></b>
  </div>
  <div class="tray">
    <svg class="chev" viewBox="0 0 16 10"><path d="m2 8 6-6 6 6" fill="none" stroke="#fff" stroke-width="1.800"/></svg>
    <span class="ime">中</span><span class="ime bo">ㄅ</span>
    <svg class="net" viewBox="0 0 22 22"><path d="M13 2H2v14h14v-4M6 20h8M10 16v4" fill="none" stroke="#fff" stroke-width="1.500"/><path d="M15 2h5v6h-5zM17.500 8v12" fill="none" stroke="#fff" stroke-width="1.500"/></svg>
    <svg class="net" viewBox="0 0 22 22"><path d="M2 8v6h3.500l5 4.500v-15L5.500 8z" fill="none" stroke="#fff" stroke-width="1.400"/><path d="M13 8q2 3 0 6M15.500 6q3.500 5 0 10M18 4q5 7 0 14" fill="none" stroke="#fff" stroke-width="1.400"/></svg>
    <svg class="net" viewBox="0 0 22 22"><path d="M8 5h10v12H3v-6" fill="#eee" stroke="#fff" stroke-width="1.500"/><path d="M20 8v6" stroke="#fff" stroke-width="2.500"/><path d="M5 1 1 8h4l-1 5 5-7H5z" fill="#fff" stroke="#202020" stroke-width=".8"/></svg>
    <div class="clock"><span>下午 11:44</span><span>2023/5/7</span></div>
    <em class="notif">3</em>
  </div>
</div>
</div>
</body>
</html>
```
FILE: styles.css
```css
*, *::before, *::after { box-sizing: border-box; }
html, body { margin: 0; padding: 0; }
body { width: 1920px; height: 1080px; overflow: hidden; background: #f7f7f7; color: #000; font-family: "Noto Sans", "Noto Sans CJK TC", sans-serif; font-size: 14px; font-weight: 400; }
.defs { position: absolute; }
svg { display: block; flex: none; overflow: visible; }
i, em { font-style: normal; display: block; }
b { font-weight: 400; }
p, ul { margin: 0; padding: 0; list-style: none; }
.app { width: 1920px; height: 1080px; display: flex; flex-direction: column; }
.ic { width: 19px; height: 19px; }
.ic18 { width: 18px; height: 18px; }
.w16 { width: 16px; height: 16px; }
.dn { width: 8px; height: 8px; color: #333; }
.off, .off .dn { color: #b4b4b4; }
.off .dn { color: #999; }
.flip { transform: scaleX(-1); }

/* title bar */
.titlebar { height: 40px; flex: none; display: flex; align-items: center; border-top: 1px solid #bdbdbd; border-bottom: 1px solid #bdbdbd; }
.brand { width: 146px; height: 38px; border-right: 1px solid #bdbdbd; display: flex; align-items: center; padding-left: 4px; }
.ds { width: 22px; height: 22px; }
.brand-name { width: 108px; padding-left: 4px; color: #da291c; font: italic 300 14px/18px "Open Sans", sans-serif; letter-spacing: -.1px; padding-top: 1px; }
.brand-name b { font-weight: 800; }
.tri-right { border: 5px solid transparent; border-left-color: #777; border-right: 0; }
.quick { display: flex; align-items: center; padding-left: 27px; width: 554px; }
.home { margin-right: 10px; }
.qa { width: 47px; display: flex; align-items: center; gap: 9px; padding-left: 3px; }
.qa.last { width: 44px; }
.qa .dn { margin-left: 1px; }
.picker { height: 32px; width: 48px; border: 1px solid #8c8c8c; display: flex; align-items: center; margin-left: -2px; margin-right: 7px; }
.picker b { width: 32px; height: 30px; background: #b1b1b1; border-right: 1px solid #8c8c8c; display: grid; place-items: center; margin-right: 4px; }
.q3 { margin-right: 14px; }
.q3 + .dn { margin-left: -4px; }
.doc-title { width: 695px; text-align: center; font-size: 14px; letter-spacing: -.4px; padding-top: 0; }
.cmd-search { margin-left: 60px; width: 252px; height: 29px; background: #fff; border: 1px solid #b5b5b5; display: flex; align-items: center; padding-left: 6px; color: #666; font-size: 15.500px; line-height: 24px; }
.cmd { width: 18px; height: 18px; margin-right: 9px; }
.cmd-search .ic18 { margin-left: 117px; margin-right: 7px; color: #888; }
.cmd-search .dn { width: 10px; height: 10px; color: #777; }
.win-btns { display: flex; align-items: center; gap: 21px; padding-left: 14px; color: #444; }
.win-btns svg { width: 20px; height: 20px; }
.win-btns .w16 { width: 16px; height: 16px; margin: 0 2px; }

/* command ribbon */
.ribbon { height: 82px; flex: none; display: flex; border-bottom: 1px solid #828282; border-right: 1px solid #888; }
.rb { display: flex; flex-direction: column; align-items: center; padding-top: 6px; text-align: center; line-height: 19px; font-size: 13.800px; white-space: nowrap; }
.rb .ic { margin-bottom: 1px; }
.rb .dn { margin-top: auto; margin-bottom: 9px; }
.w49 { width: 49px; } .w71 { width: 71px; padding-right: 2px; } .w82 { width: 82px; } .w66 { width: 66px; } .w52 { width: 52px; } .w128 { width: 128px; } .w54 { width: 54px; } .w68 { width: 68px; } .w56 { width: 56px; }
.w49, .w54 { padding-left: 1px; }
.w68 { letter-spacing: -.2px; padding-left: 2px; }
.sep { width: 1px; background: #c2c2c2; margin: 1px 0 3px; }
.sep.first { margin-left: 5px; }
.tools { width: 148px; display: grid; grid-template-columns: 28px 10px 31px 10px 29px 10px 30px; grid-template-rows: repeat(3, 26px); place-items: center; }
.glyph-a { font: 23px/20px "Liberation Serif", serif; color: #fff; -webkit-text-stroke: 1px #2b75a0; }
.point { width: 7px; height: 7px; background: #3c8ab0; border: 1px solid #174a66; }
.rlist { width: 179px; padding: 0 5px 0 3px; font-size: 13.900px; }
.rlist p { height: 26px; display: flex; align-items: center; }
.rlist .ic { width: 18px; height: 18px; margin-right: 8px; }
.rlist .dn { margin-left: auto; }
.collapse { width: 12px; height: 8px; margin: 64px 0 0 auto; margin-right: 7px; }

/* work area with the model canvas behind it */
.work { position: relative; height: 856px; flex: none; display: flex; flex-direction: column; overflow: hidden;
  background:
    linear-gradient(to bottom, rgba(255,255,255,0) 470px, rgba(255,255,255,.75) 545px, rgba(255,255,255,.97) 600px, #fff 640px),
    radial-gradient(ellipse 620px 640px at 1560px 350px, #dadde9 0, rgba(221,225,235,.92) 35%, rgba(230,234,242,.6) 65%, rgba(255,255,255,0) 100%),
    linear-gradient(to right, rgba(255,255,255,0) 1250px, rgba(234,237,242,.9) 1700px, #ecedf0 1920px),
    linear-gradient(174deg, #fff 0, #fff 28%, #f2f4f9 40%, #e2e6f0 54%, #e0e4ee 100%); }
.scene { position: absolute; left: 0; top: 0; width: 1920px; height: 856px; }
.tabrow { position: relative; height: 28px; display: flex; }
.tabs { width: 786px; display: flex; flex: none; }
.tabs a { background: #d4d4d4; border-right: 1px solid #828282; border-bottom: 1px solid #828282; font-size: 15px; line-height: 26px; text-align: center; white-space: nowrap; color: #111; }
.tabs .on { background: #f7f7f7; border-bottom-color: #f7f7f7; }
.t56 { width: 56px; } .t55 { width: 56px; } .t57 { width: 56px; } .t88 { width: 88px; } .t187 { width: 187px; } .t90 { width: 91px; } .t84 { width: 84px; }
.tabs .t88 { letter-spacing: -.25px; }
.tabs .t187 { letter-spacing: 0; }
.tabs .t90, .tabs .t90 + .t56 { font-size: 14.600px; letter-spacing: -.25px; }
.hud { padding-left: 131px; display: grid; grid-template-columns: 25px 26px 27px 25px 26px 26px 12px 29px 12px 29px 12px 27px 25px 13px 29px 12px; align-items: center; justify-items: center; padding-top: 2px; }
.hud .dn { color: #777; }
.docbtns { margin-left: auto; display: flex; gap: 10px; align-items: center; padding-right: 11px; color: #9a9a9a; }
.lower { position: relative; flex: 1; display: flex; }
.panel { width: 273px; background: #f7f7f7; border-right: 1px solid #828282; display: flex; flex-direction: column; padding-top: 3px; box-shadow: inset 0 1px 0 #9dbcc0; }
.grip { width: 270px; height: 21px; border-top: 1px solid #c4c4c4; border-bottom: 1px solid #c4c4c4; display: grid; place-items: center; }
.grip i, .splitter i { width: 6px; height: 6px; border-radius: 50%; background: #d5d5d5; border: 1px solid #999; }
.ptabs { height: 26px; margin: 4px 2px 0 2px; width: 268px; display: flex; border-bottom: 1px solid #a8a8a8; }
.ptabs b { width: 40px; height: 26px; background: #d4d4d4; border: 1px solid #828282; border-left: 0; display: grid; place-items: center; }
.ptabs .on { background: #f7f7f7; border-bottom-color: #f7f7f7; width: 40px; padding-left: 1px; }
.more { width: 8px; height: 12px; margin: 7px 0 0 auto; margin-right: 6px; }
.filter { height: 32px; width: 262px; margin: 0 0 0 5px; border: 1px solid #bdbdbd; display: flex; align-items: center; padding-left: 1px; }
.tree { width: 270px; overflow: hidden; border-left: 1px solid #bbb; font-size: 14.600px; }
.tree li { height: 24px; display: flex; align-items: center; padding-left: 26px; white-space: nowrap; line-height: 24px; }
.tree li .ic { margin-right: 5px; width: 18px; height: 18px; }
.tree li.root { padding-left: 4px; height: 25px; }
.tree li.root .ic { margin-right: 3px; width: 19px; height: 19px; }
.tree li.root > span { letter-spacing: .16px; margin-left: 2px; }
.wide { letter-spacing: 2px; }
.tree .exp { padding-left: 9px; }
.tree .exp::before { content: ""; width: 5px; margin-right: 12px; border: 4px solid transparent; border-left: 5px solid #666; border-right: 0; }
.rollback { width: 269px; height: 4px; flex: none; margin-left: 1px; background: #378ccb; }
.hscroll { margin-top: auto; width: 270px; height: 21px; background: #efefef; padding: 7px 0 0 22px; border-top: 1px solid #fff; }
.hscroll i { width: 177px; height: 6px; background: #858585; }
.pfoot { height: 4px; width: 270px; margin-top: 1px; border-top: 1px solid #aaa; border-bottom: 1px solid #aaa; }
.splitter { width: 12px; height: 48px; margin: 375px 0 0 -1px; border: 1px solid #828282; border-left: 0; background: #f7f7f7; display: flex; align-items: center; padding-left: 1px; }
.taskpane { margin: 30px 0 0 auto; width: 33px; height: 181px; border: 1px solid #828282; border-right: 0; }
.taskpane b { height: 30px; background: #d4d4d4; border-bottom: 1px solid #828282; display: grid; place-items: center; padding-bottom: 2px; }
.taskpane b:last-child { border-bottom: 0; }
.taskpane .on { background: #f7f7f7; }
.taskpane .ball { width: 17px; height: 17px; }
.tip { position: absolute; left: 1369px; top: 284px; width: 88px; height: 24px; line-height: 22px; text-align: center; background: #fff; border: 1px solid #ddd; border-radius: 2px; box-shadow: 3px 3px 3px rgba(0,0,0,.45); color: #555; font-size: 14.800px; }

/* document tabs and status */
.doctabs { height: 21px; flex: none; display: flex; border-top: 1px solid #828282; border-bottom: 1px solid #828282; background: #f7f7f7; font-size: 15.500px; }
.navs { width: 82px; padding-left: 2px; display: flex; background: #9a9cb4; border-top: 1px solid #111; }
.navs b { width: 20px; border: 1px solid #80829c; background: #a9abc2; display: grid; place-items: center; }
.navs svg { width: 15px; height: 15px; fill: #85879e; stroke: #85879e; }
.doctabs a { background: #d4d4d4; border-right: 1px solid #828282; line-height: 18px; text-align: center; white-space: nowrap; }
.doctabs .on { background: #f7f7f7; }
.b61 { width: 62px; padding-left: 5px; } .b77 { width: 77px; } .b108 { width: 108px; letter-spacing: .2px; }
.b108 { padding-right: 6px; }
.status { height: 21px; flex: none; background: #f7f7f7; display: flex; align-items: center; font-size: 14.500px; line-height: 21px; white-space: nowrap; }
.edition { width: 1588px; padding-left: 1px; letter-spacing: 0; }
.latin { font-size: 15px; letter-spacing: .22px; }
.editing { width: 221px; letter-spacing: .35px; }
.units { width: 60px; }
.up { border: 3px solid transparent; border-bottom: 4px solid #333; border-top: 0; margin-right: 26px; }
.tag { width: 18px; height: 14px; }

/* desktop taskbar */
.taskbar { height: 60px; flex: none; background: #202020; border-top: 1px solid #3c3c3c; display: flex; align-items: center; color: #fff; }
.wicon { width: 32px; height: 30px; margin-left: 24px; }
.weather { width: 212px; padding-left: 8px; display: flex; flex-direction: column; font-size: 14.300px; line-height: 20px; letter-spacing: -.2px; margin-top: -2px; }
.dim { color: #c8c8c8; }
.start { width: 29px; height: 29px; margin-left: 8px; }
.search { margin-left: 17px; width: 275px; height: 40px; border-radius: 20px; background: #383838; color: #c8c8c8; display: flex; align-items: center; gap: 13px; padding-left: 15px; font-size: 17px; line-height: 38px; }
.search .ic18 { color: #eee; width: 19px; height: 19px; }
.apps { display: flex; margin-left: 2px; padding-left: 0; }
.apps b { position: relative; width: 55px; height: 50px; display: grid; place-items: center; }
.apps svg { width: 30px; height: 30px; }
.run::after { content: ""; position: absolute; left: 24px; bottom: 0; width: 8px; height: 4px; border-radius: 2px; background: #9a9a9a; }
.act { background: #2d2d2d; border-radius: 6px; box-shadow: 0 0 0 1px #333; }
.apps .act { width: 49px; margin-left: 3px; }
.act::after { left: 15px; width: 20px; background: #4cc2ff; }
.badge { position: absolute; left: 29px; top: 0; width: 20px; height: 20px; border-radius: 50%; background: #4cc2ff; color: #003; font-size: 13px; line-height: 20px; text-align: center; }
.who { background: #0a5296; color: #dce9f7; font-size: 8.500px; line-height: 19px; }
.line { position: absolute; left: 16px; top: 18px; width: 23px; text-align: center; font: 800 7.500px/12px "Open Sans", sans-serif; color: #06b906; }
.sw { position: absolute; left: 12px; top: 13px; font: 800 15px/20px "Liberation Sans Narrow", "Liberation Sans", sans-serif; letter-spacing: -1px; }
.yr { position: absolute; left: 21px; top: 31px; font: 700 9px/10px "Liberation Sans", sans-serif; letter-spacing: -.8px; }
.tray { margin-left: auto; display: flex; align-items: center; padding-right: 25px; }
.chev { width: 16px; height: 10px; margin-right: 22px; }
.ime { font-size: 18px; width: 19px; margin-top: -2px; }
.bo { margin-left: 30px; margin-right: 27px; }
.net { width: 21px; height: 21px; margin-right: 9px; }
.clock { width: 82px; display: flex; flex-direction: column; text-align: right; font-size: 14.500px; line-height: 20px; letter-spacing: -.1px; margin-top: -1px; }
.notif { width: 20px; height: 20px; margin-left: 9px; border-radius: 50%; background: #4cc2ff; color: #002; font-size: 12px; line-height: 20px; text-align: center; }
```
